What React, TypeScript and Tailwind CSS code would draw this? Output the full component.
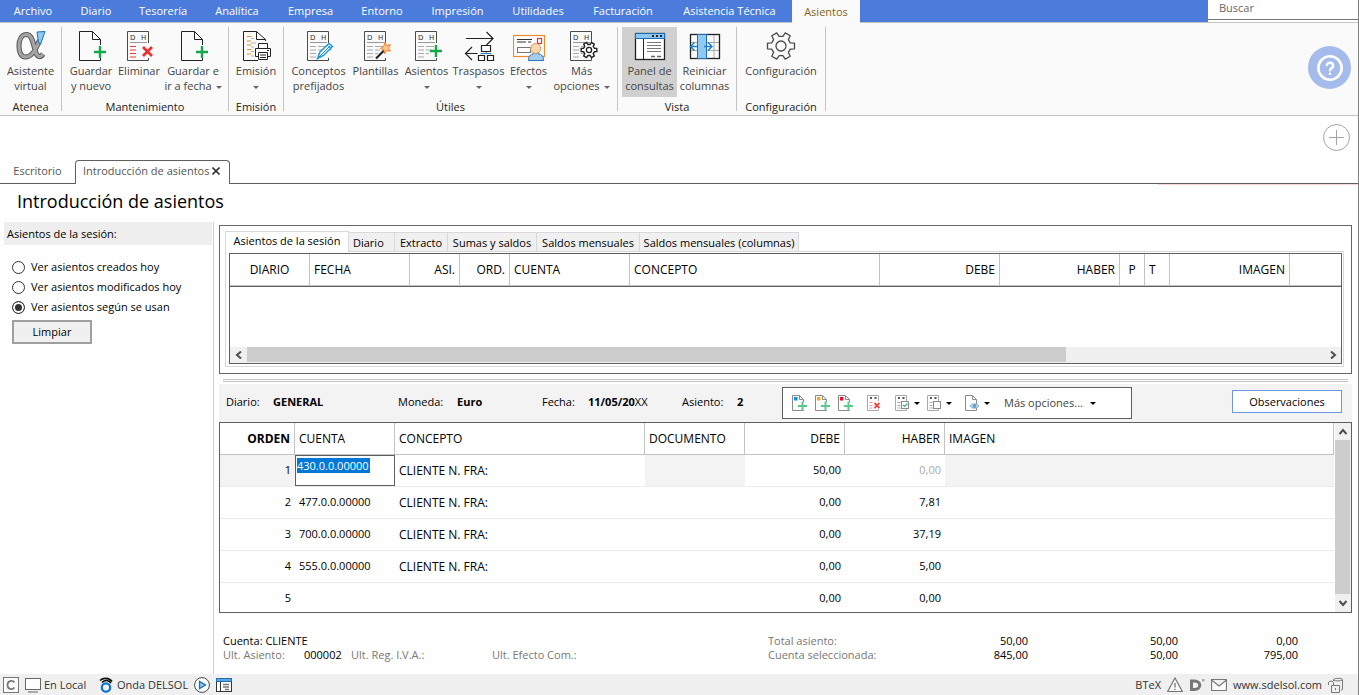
import { useState } from 'react';
import type { ReactNode } from 'react';
import clsx from 'clsx';

const menuItems = [
  { label: 'Archivo', width: 'w-[66px]' },
  { label: 'Diario', width: 'w-[60px]' },
  { label: 'Tesorería', width: 'w-[74px]' },
  { label: 'Analítica', width: 'w-[74px]' },
  { label: 'Empresa', width: 'w-[73px]' },
  { label: 'Entorno', width: 'w-[70px]' },
  { label: 'Impresión', width: 'w-[81px]' },
  { label: 'Utilidades', width: 'w-[80px]' },
  { label: 'Facturación', width: 'w-[90px]' },
  { label: 'Asistencia Técnica', width: 'w-[123px]' },
];

/* ---------- Icons ---------- */

function Icon({ children, className = 'size-8' }: { children: ReactNode; className?: string }) {
  return (
    <svg viewBox="0 0 32 32" className={className} fill="none" stroke="#222" aria-hidden="true">
      {children}
    </svg>
  );
}

function SmallIcon({ children }: { children: ReactNode }) {
  return (
    <svg viewBox="0 0 18 18" className="size-[18px]" fill="none" stroke="#8a8a8a" aria-hidden="true">
      {children}
    </svg>
  );
}

function Caret({ className = 'text-[#666]' }: { className?: string }) {
  return (
    <svg viewBox="0 0 6 3" className={clsx('inline-block h-[3px] w-[6px] align-middle', className)} aria-hidden="true">
      <path d="M0 0h6L3 3z" fill="currentColor" />
    </svg>
  );
}

// Gear outline with six teeth around (cx, cy)
function gearPath(cx: number, cy: number, outer: number, inner: number) {
  const points: string[] = [];
  for (let i = 0; i < 6; i++) {
    const steps = [
      [inner, -19],
      [outer, -12],
      [outer, 12],
      [inner, 19],
    ];
    steps.forEach(([r, offset]) => {
      const a = ((i * 60 + offset) * Math.PI) / 180;
      points.push(`${(cx + r * Math.cos(a)).toFixed(2)} ${(cy + r * Math.sin(a)).toFixed(2)}`);
    });
  }
  return `M${points.join('L')}Z`;
}

function AlphaIcon() {
  const d = 'M24.5 11C21 21 16 28 10.5 28C6 28 4 23 4 17C4 10 7 5.5 11.5 5.5C18 5.5 18 16 21 24C22.5 28 25.5 29 28 25';
  return (
    <Icon>
      <path d={d} stroke="#5c5c5c" strokeWidth="5.2" />
      <path d={d} stroke="#a3a3a3" strokeWidth="3.2" />
      <path d="M22 3L30 2.5L25.5 15.5L23.5 13Z" fill="#8ecbf1" stroke="#1c6fb3" />
    </Icon>
  );
}

function DocPlusIcon() {
  return (
    <Icon>
      <path d="M17.5 2.5H4.5V31.5H25.5V29M17.5 2.5L25.5 10.5V16M17.5 2.5V10.5H25.5" />
      <path d="M25 17v12M19 23h12" stroke="#14a84b" strokeWidth="2.4" />
    </Icon>
  );
}

function LedgerIcon({ children, red = false }: { children: ReactNode; red?: boolean }) {
  return (
    <Icon>
      <path d="M25.5 14V2.5H4.5V31.5H25.5V29" stroke="#4a4a4a" />
      <g fill="#333" stroke="none" fontFamily="DejaVu Sans" fontSize="7">
        <text x="7" y="11">D</text>
        <text x="18" y="11">H</text>
      </g>
      <path d="M7 13.5h17" stroke="#999" />
      {red ? (
        <path d="M7 17.5h6M7 21h6M7 24.5h6M7 28h6" stroke="#ee3a3a" strokeWidth="1.2" />
      ) : (
        <path d="M7 17.5h6M7 21h6M7 24.5h6M7 28h6M15 17.5h8M15 21h5M15 24.5h3" stroke="#aaa" />
      )}
      {children}
    </Icon>
  );
}

function LedgerDeleteIcon() {
  return (
    <LedgerIcon red>
      <path d="M20 18l9 9M29 18l-9 9" stroke="#e83232" strokeWidth="2.8" />
    </LedgerIcon>
  );
}

function LedgerPenIcon() {
  return (
    <LedgerIcon>
      <path d="M14.5 29.5L17 23L26 14.5L29.5 17.5L20.5 26.5Z" fill="#fff" stroke="#189ad8" strokeWidth="1.4" />
      <path d="M15 29L27 17M24 16.5l3.5 3M28.5 16.5l-1.5 5" stroke="#189ad8" />
    </LedgerIcon>
  );
}

function LedgerWandIcon() {
  return (
    <LedgerIcon>
      <path d="M16 29.5L25 20.5" stroke="#222" strokeWidth="2.2" />
      <path d="M25 13l1.5 3.5l4-.8l-2 3.3l2 3l-3.8-.3l-2 3l-.8-3.8l-3.4-1.5l3.2-2z" fill="#ffc48a" stroke="#ef8132" />
    </LedgerIcon>
  );
}

function LedgerPlusIcon() {
  return (
    <LedgerIcon>
      <path d="M25 16v12M19 22h12" stroke="#14a84b" strokeWidth="2.4" />
    </LedgerIcon>
  );
}

function LedgerGearIcon() {
  return (
    <LedgerIcon>
      <path d={gearPath(23, 21, 8, 5.6)} fill="#fff" strokeWidth="1.4" strokeLinejoin="round" />
      <circle cx="23" cy="21" r="2.6" strokeWidth="1.3" />
    </LedgerIcon>
  );
}

function PrintIcon() {
  return (
    <Icon>
      <path d="M16.5 2.5H3.5V31.5H18M16.5 2.5L25.5 10.5V12M16.5 2.5V10.5H25.5" />
      <path d="M7 7.5h4M7 12h4M7 16h4M7 20.5h4M7 25h4" stroke="#f0921e" strokeWidth="1.2" />
      <path d="M11 9.5h3M11 14h5M11 18h3M11 22.5h3M11 27h3" stroke="#b5b5b5" />
      <path d="M15.5 19.5H30.5V27.5H15.5Z" fill="#fff" />
      <path d="M18.5 14.5H27.5V19.5H18.5ZM18.5 23.5H27.5V30.5H18.5ZM20 26h6M20 28.5h6M27 21.5h2" fill="#fff" />
    </Icon>
  );
}

function TransferIcon() {
  return (
    <Icon>
      <path d="M3 9.5H30M23.5 3L30 9.5L23.5 16M14.5 24.5H2.5M9 18L2.5 24.5L9 31" strokeWidth="1.2" />
      <path d="M18.5 16.5h9v6h-9zM15.5 26.5h6v5h-6zM24.5 26.5h6v5h-6z" fill="#fff" strokeWidth="1.2" />
      <path d="M18 25.5V24.5H28V25.5M23 23v1.5" stroke="#1c7cc7" />
    </Icon>
  );
}

function EffectsIcon() {
  return (
    <Icon>
      <rect x="0.5" y="6.5" width="31" height="21" fill="#fdfdfd" stroke="#ef8a2c" strokeWidth="1.2" />
      <path d="M4 10.5h15M4 13h9M15 13h3" stroke="#333" />
      <rect x="24.5" y="9.5" width="4" height="5" stroke="#e8323a" strokeWidth="1.2" />
      <rect x="4.5" y="18.5" width="13" height="5" stroke="#777" />
      <path d="M15.5 31.5C15.5 26.5 18 24.5 23 24.5S30.5 26.5 30.5 31.5Z" fill="#a6cdf0" stroke="#2676b8" />
      <circle cx="22.7" cy="19.5" r="5" fill="#fbd9ae" stroke="#d39a62" />
    </Icon>
  );
}

function QueryPanelIcon() {
  return (
    <Icon>
      <rect x="1.5" y="4.5" width="29" height="26" fill="#fff" strokeWidth="1.3" />
      <rect x="1.5" y="4.5" width="29" height="5" fill="#8ec8f0" stroke="#1c6fb3" />
      <path d="M18 7h2M22 7h2M26 7h2" strokeWidth="1.8" />
      <path d="M9.5 10V30" />
      <path d="M13 13.5H27M13 16.5H27M13 19.5H27M13 22.5H27" stroke="#777" />
      <path d="M17 27.5h4M23 27.5h4" stroke="#666" strokeWidth="1.5" />
    </Icon>
  );
}

function ResetColumnsIcon() {
  return (
    <Icon>
      <path d="M1 13.5H31M1 21.5H31M25 6V29" stroke="#aaa" />
      <rect x="1.5" y="5.5" width="29" height="24" strokeWidth="1.3" />
      <rect x="8.5" y="5.5" width="9" height="24" fill="#90c9f2" stroke="#1c6fb3" />
      <path
        d="M8 17.5H2M5.5 13.5L1.5 17.5L5.5 21.5M15 17.5H23M19 13.5L23 17.5L19 21.5"
        stroke="#1c7cc7"
        strokeWidth="1.4"
      />
    </Icon>
  );
}

function GearIcon() {
  return (
    <Icon>
      <path d={gearPath(16, 17, 13.8, 9.8)} stroke="#4a4a4a" strokeWidth="1.3" strokeLinejoin="round" />
      <circle cx="16" cy="17" r="5" stroke="#4a4a4a" strokeWidth="1.3" />
    </Icon>
  );
}

function PageIcon({ children }: { children: ReactNode }) {
  return (
    <SmallIcon>
      <path d="M9.5 1.5H2.5V16.5H13.5V5.5L9.5 1.5V5.5H13.5" fill="#fff" />
      {children}
    </SmallIcon>
  );
}

function NewEntryIcon({ color }: { color: string }) {
  return (
    <PageIcon>
      <rect x="4" y="3" width="3.5" height="3.5" fill={color} stroke="none" />
      <path d="M12.5 8v8M9 12h8" stroke="#fff" strokeWidth="3.5" />
      <path d="M12.5 7.5v9M8 12h9" stroke="#5bc98c" strokeWidth="2" />
    </PageIcon>
  );
}

function SmallLedgerIcon({ children, red = false }: { children: ReactNode; red?: boolean }) {
  return (
    <SmallIcon>
      <path d="M13.5 7V1.5H2.5V16.5H13.5V15" stroke="#aaa" />
      <path d="M5 4h2M9.5 4h2" stroke="#555" strokeWidth="2" />
      <path d="M4.5 8.5h3M4.500 11.500h3M4.500 14h3" stroke={red ? '#f09090' : '#aaa'} />
      {children}
    </SmallIcon>
  );
}

/* ---------- Ribbon ---------- */

type RibbonItem = {
  lines: string[];
  icon: ReactNode;
  width: string;
  caret?: 'inline' | 'below';
  active?: boolean;
};

type RibbonGroup = { title: string; width: string; items: RibbonItem[] };

const ribbon: RibbonGroup[] = [
  {
    title: 'Atenea',
    width: 'w-[62px]',
    items: [{ lines: ['Asistente', 'virtual'], icon: <AlphaIcon />, width: 'w-[60px]' }],
  },
  {
    title: 'Mantenimiento',
    width: 'w-[167px]',
    items: [
      { lines: ['Guardar', 'y nuevo'], icon: <DocPlusIcon />, width: 'w-[48px]' },
      { lines: ['Eliminar'], icon: <LedgerDeleteIcon />, width: 'w-[48px]' },
      { lines: ['Guardar e', 'ir a fecha'], icon: <DocPlusIcon />, width: 'w-[60px]', caret: 'inline' },
    ],
  },
  {
    title: 'Emisión',
    width: 'w-[55px]',
    items: [{ lines: ['Emisión'], icon: <PrintIcon />, width: 'w-[48px]', caret: 'below' }],
  },
  {
    title: 'Útiles',
    width: 'w-[334px]',
    items: [
      { lines: ['Conceptos', 'prefijados'], icon: <LedgerPenIcon />, width: 'w-[60px]' },
      { lines: ['Plantillas'], icon: <LedgerWandIcon />, width: 'w-[54px]' },
      { lines: ['Asientos'], icon: <LedgerPlusIcon />, width: 'w-[48px]', caret: 'below' },
      { lines: ['Traspasos'], icon: <TransferIcon />, width: 'w-[56px]', caret: 'below' },
      { lines: ['Efectos'], icon: <EffectsIcon />, width: 'w-[44px]', caret: 'below' },
      { lines: ['Más', 'opciones'], icon: <LedgerGearIcon />, width: 'w-[62px]', caret: 'inline' },
    ],
  },
  {
    title: 'Vista',
    width: 'w-[119px]',
    items: [
      { lines: ['Panel de', 'consultas'], icon: <QueryPanelIcon />, width: 'w-[55px]', active: true },
      { lines: ['Reiniciar', 'columnas'], icon: <ResetColumnsIcon />, width: 'w-[55px]' },
    ],
  },
  {
    title: 'Configuración',
    width: 'w-[89px]',
    items: [{ lines: ['Configuración'], icon: <GearIcon />, width: 'w-[80px]' }],
  },
];

function RibbonButton({ item }: { item: RibbonItem }) {
  return (
    <button
      className={clsx(
        'flex h-[70px] flex-col items-center pt-0.5 whitespace-nowrap text-[#444] leading-[15px]',
        item.width,
        item.active && 'bg-[#d0d0d0]',
      )}
    >
      <span className="mb-0.5">{item.icon}</span>
      <span>{item.lines[0]}</span>
      {item.lines[1] && (
        <span>
          {item.lines[1]}
          {item.caret === 'inline' && <Caret className="ml-1 text-[#666]" />}
        </span>
      )}
      {item.caret === 'below' && (
        <span>
          <Caret />
        </span>
      )}
    </button>
  );
}

/* ---------- Data ---------- */

const queryTabs = [
  { label: 'Asientos de la sesión', className: 'w-[124px]' },
  { label: 'Diario', className: 'w-[46px] pl-1 text-left' },
  { label: 'Extracto', className: 'w-[53px]' },
  { label: 'Sumas y saldos', className: 'w-[89px]' },
  { label: 'Saldos mensuales', className: 'w-[103px]' },
  { label: 'Saldos mensuales (columnas)', className: 'w-[159px]' },
];

const queryColumns = [
  { label: 'DIARIO', className: 'w-[80px] text-center' },
  { label: 'FECHA', className: 'w-[100px] text-left' },
  { label: 'ASI.', className: 'w-[50px] text-right' },
  { label: 'ORD.', className: 'w-[50px] text-right' },
  { label: 'CUENTA', className: 'w-[120px] text-left' },
  { label: 'CONCEPTO', className: 'w-[250px] text-left' },
  { label: 'DEBE', className: 'w-[120px] text-right' },
  { label: 'HABER', className: 'w-[120px] text-right' },
  { label: 'P', className: 'w-[25px] text-center' },
  { label: 'T', className: 'w-[25px] text-left' },
  { label: 'IMAGEN', className: 'w-[120px] text-right' },
];

const entryColumns = [
  { label: 'ORDEN', className: 'w-[75px] text-right font-bold' },
  { label: 'CUENTA', className: 'w-[100px] text-left' },
  { label: 'CONCEPTO', className: 'w-[250px] text-left' },
  { label: 'DOCUMENTO', className: 'w-[100px] text-left' },
  { label: 'DEBE', className: 'w-[100px] text-right' },
  { label: 'HABER', className: 'w-[100px] text-right' },
  { label: 'IMAGEN', className: 'text-left' },
];

const entries = [
  { orden: 1, cuenta: '430.0.0.00000', concepto: 'CLIENTE N. FRA:', debe: '50,00', haber: '0,00' },
  { orden: 2, cuenta: '477.0.0.00000', concepto: 'CLIENTE N. FRA:', debe: '0,00', haber: '7,81' },
  { orden: 3, cuenta: '700.0.0.00000', concepto: 'CLIENTE N. FRA:', debe: '0,00', haber: '37,19' },
  { orden: 4, cuenta: '555.0.0.00000', concepto: 'CLIENTE N. FRA:', debe: '0,00', haber: '5,00' },
  { orden: 5, cuenta: '', concepto: '', debe: '0,00', haber: '0,00' },
];

const sessionFilters = ['Ver asientos creados hoy', 'Ver asientos modificados hoy', 'Ver asientos según se usan'];

function ScrollArrow({ d, label, className }: { d: string; label: string; className: string }) {
  return (
    <button aria-label={label} className={clsx('flex shrink-0 items-center justify-center', className)}>
      <svg viewBox="0 0 8 8" className="size-2" fill="none" stroke="#4d4d4d" strokeWidth="2">
        <path d={d} />
      </svg>
    </button>
  );
}

/* ---------- Sections ---------- */

function MenuBar() {
  return (
    <header className="flex h-[23px] border-b border-[#c3c3c3] bg-[#4b7bdb] text-white">
      <nav className="flex grow">
        {menuItems.map(({ label, width }) => (
          <button key={label} className={clsx('whitespace-nowrap', width)}>
            {label}
          </button>
        ))}
        <button className="-mb-px ml-px w-[68px] bg-[#fafafa] text-[#866213]">Asientos</button>
      </nav>
      <div className="w-[150px] bg-white">
        <input
          type="search"
          aria-label="Buscar"
          placeholder="Buscar"
          className="block h-5 w-full border-b border-[#777] px-[11px] pb-1 text-black outline-none placeholder:text-[#666]"
        />
      </div>
    </header>
  );
}

function Ribbon() {
  return (
    <div className="flex h-[93px] border-b border-[#c3c3c3] bg-[#fafafa]">
      {ribbon.map((group) => (
        <section
          key={group.title}
          className={clsx('mt-1 mb-1 flex shrink-0 flex-col items-center border-r border-[#c3c3c3]', group.width)}
        >
          <div className="flex justify-center">
            {group.items.map((item) => (
              <RibbonButton key={item.lines.join(' ')} item={item} />
            ))}
          </div>
          <h2 className="mt-[3px] leading-[14px] text-[#222]">{group.title}</h2>
        </section>
      ))}
      <button
        aria-label="Ayuda"
        className="mt-[23px] mr-[7px] ml-auto flex size-[43px] shrink-0 items-center justify-center rounded-full bg-[#a5bbeb]"
      >
        <svg viewBox="0 0 24 24" className="size-7" fill="none" stroke="#fff" strokeWidth="2.2" strokeLinecap="round">
          <circle cx="12" cy="12" r="10" />
          <path d="M9.3 9.3a2.8 2.8 0 0 1 5.4.9c0 1.8-2.7 2.300-2.700 3.800M12 17h.01" />
        </svg>
      </button>
    </div>
  );
}

function DocumentTabs() {
  return (
    <div>
      <div className="flex h-11 justify-end pt-2 pr-2">
        <button aria-label="Añadir pestaña" className="size-[27px]">
          <svg viewBox="0 0 27 27" className="size-[27px]" fill="none" stroke="#a3a3a3">
            <circle cx="13.5" cy="13.5" r="13" />
            <path d="M6 13.5H21M13.5 6V21" />
          </svg>
        </button>
      </div>
      <div className="flex h-6 border-b border-[#5f5f5f] text-[#555]">
        <button className="w-[75px] pb-0.5">Escritorio</button>
        <div className="-mb-px flex w-[155px] items-center rounded-t-[4px] border border-b-0 border-[#5f5f5f] bg-white pr-[9px] pb-[3px] pl-[7px]">
          <button className="whitespace-nowrap">Introducción de asientos</button>
          <button aria-label="Cerrar" className="ml-auto">
            <svg viewBox="0 0 8 8" className="size-2" stroke="#333" strokeWidth="1.6">
              <path d="M.5.5l7 7M7.5.5l-7 7" />
            </svg>
          </button>
        </div>
      </div>
      <div className="ml-auto h-px w-[200px] bg-[#f6d6d6]" />
    </div>
  );
}

function Sidebar() {
  const [filter, setFilter] = useState(2);

  return (
    <aside className="w-[214px] shrink-0 border-r border-[#d0d0d0] pl-1">
      <h2 className="mr-px h-[23px] bg-[#eee] pl-[3px] leading-[23px]">Asientos de la sesión:</h2>
      <div className="mt-3 flex flex-col pl-2">
        {sessionFilters.map((label, index) => (
          <label key={label} className="flex h-5 items-center gap-1.5">
            <input
              type="radio"
              name="filtro"
              checked={filter === index}
              onChange={() => setFilter(index)}
              className="size-[13px] appearance-none rounded-full border border-[#333] bg-white checked:bg-[#333] checked:shadow-[inset_0_0_0_2px_#fff]"
            />
            {label}
          </label>
        ))}
      </div>
      <button className="mt-[3px] ml-2 h-6 w-20 border-2 border-[#9f9f9f] bg-[#f0f0f0]">Limpiar</button>
    </aside>
  );
}

function QueryPanel() {
  const [tab, setTab] = useState(0);

  return (
    <section className="border border-[#666] px-[5px] pt-[5px] pb-1.5">
      <div className="flex items-end">
        {queryTabs.map(({ label, className }, index) => (
          <button
            key={label}
            onClick={() => setTab(index)}
            className={clsx(
              'border border-b-0 border-[#d9d9d9] whitespace-nowrap',
              className,
              index > 0 && 'border-l-0',
              tab === index ? '-mb-px h-[21px] bg-white pb-0.5' : 'h-[19px] bg-[#f0f0f0] pt-0.5',
            )}
          >
            {label}
          </button>
        ))}
      </div>
      <div className="mr-0.5 border border-[#d9d9d9] pt-px pr-px pb-0.5 pl-[3px]">
        <div className="border border-[#5f5f5f]">
          <table className="w-full table-fixed border-separate border-spacing-0 text-xs">
            <thead>
              <tr>
                {queryColumns.map(({ label, className }) => (
                  <th key={label} className={clsx('h-8 border-r border-b border-[#c3c3c3] px-1 py-0 font-normal', className)}>
                    {label}
                  </th>
                ))}
                <td className="border-b border-[#c3c3c3] p-0" />
              </tr>
            </thead>
          </table>
          <div className="h-[61px] border-t border-[#5f5f5f]" />
          <div className="flex h-4 bg-[#f0f0f0]">
            <ScrollArrow label="Desplazar a la izquierda" className="w-[17px]" d="M6 0.5L2 4L6 7.5" />
            <div className="grow">
              <div className="h-[15px] w-[76%] bg-[#cdcdcd]" />
            </div>
            <ScrollArrow label="Desplazar a la derecha" className="w-[17px]" d="M2 0.5L6 4L2 7.5" />
          </div>
        </div>
      </div>
    </section>
  );
}

function EntryToolbar() {
  return (
    <div className="flex items-center bg-[#f3f3f3] py-[3px] pl-[7px]">
      <dl className="flex items-center pb-0.5">
        <dt className="w-[47px]">Diario:</dt>
        <dd className="w-[125px] font-bold">GENERAL</dd>
        <dt className="w-[59px]">Moneda:</dt>
        <dd className="w-[85px] font-bold">Euro</dd>
        <dt className="w-[46px]">Fecha:</dt>
        <dd className="w-[94px] font-bold">
          11/05/20<span className="font-normal">XX</span>
        </dd>
        <dt className="w-[55px]">Asiento:</dt>
        <dd className="w-[45px] font-bold">2</dd>
      </dl>
      <div className="flex h-8 w-[350px] items-center border border-[#5f5f5f] bg-white pl-[7px]">
        <div className="flex gap-[5px]">
          <button aria-label="Nuevo apunte">
            <NewEntryIcon color="#0e90e0" />
          </button>
          <button aria-label="Insertar apunte">
            <NewEntryIcon color="#f5a623" />
          </button>
          <button aria-label="Duplicar apunte">
            <NewEntryIcon color="#e8102a" />
          </button>
        </div>
        <button aria-label="Eliminar apunte" className="ml-[11px]">
          <SmallLedgerIcon red>
            <path d="M9.5 9l5 5M14.5 9l-5 5" stroke="#ea4848" strokeWidth="1.8" />
          </SmallLedgerIcon>
        </button>
        <button aria-label="Validar apuntes" className="ml-2.5 flex items-center gap-[3px]">
          <SmallLedgerIcon>
            <rect x="8.5" y="7.5" width="7" height="7" fill="#fff" />
            <path d="M10 11l1.5 1.5L14.5 9.5" stroke="#35b56c" strokeWidth="1.2" />
          </SmallLedgerIcon>
          <Caret className="text-black" />
        </button>
        <button aria-label="Marcar apuntes" className="ml-[5px] flex items-center gap-[3px]">
          <SmallLedgerIcon>
            <rect x="8.5" y="7.5" width="7" height="7" fill="#fff" />
          </SmallLedgerIcon>
          <Caret className="text-black" />
        </button>
        <button aria-label="Ver documento" className="ml-[11px] flex items-center gap-[3px]">
          <PageIcon>
            <path d="M7 12C9 9 14 9 16 12C14 15 9 15 7 12Z" fill="#cfe3f2" stroke="#8bb4d0" />
            <circle cx="11.5" cy="12" r="2" fill="#5c9fd0" stroke="none" />
          </PageIcon>
          <Caret className="text-black" />
        </button>
        <button className="ml-3.5 flex items-center gap-[7px] whitespace-nowrap text-[#444]">
          Más opciones...
          <Caret className="text-black" />
        </button>
      </div>
      <button className="mr-2.5 mb-[3px] ml-auto h-[23px] w-[110px] border border-[#6f97df] bg-white">
        Observaciones
      </button>
    </div>
  );
}

function EntryGrid() {
  return (
    <div className="flex h-[191px] overflow-hidden border border-[#5f5f5f]">
      <div className="min-w-0 grow">
        <table className="w-full table-fixed border-separate border-spacing-0 text-xs">
          <thead>
            <tr>
              {entryColumns.map(({ label, className }) => (
                <th
                  key={label}
                  className={clsx(
                    'h-8 border-r border-b border-[#c3c3c3] px-1 py-0',
                    className,
                    label !== 'ORDEN' && 'font-normal',
                  )}
                >
                  {label}
                </th>
              ))}
            </tr>
          </thead>
          <tbody>
            {entries.map((row) => {
              const current = row.orden === 1;
              const cell = 'h-8 border-b border-[#ececec] py-0';
              const shade = current && 'bg-[#f3f3f3]';
              return (
                <tr key={row.orden}>
                  <td className={clsx(cell, 'px-1 text-right text-[11px]', shade)}>{row.orden}</td>
                  <td className={clsx(cell, 'text-[11px]', current ? 'px-0' : 'px-1')}>
                    {current ? (
                      <div className="h-[31px] border border-[#5f5f5f] pt-0.5 pl-px">
                        <input
                          aria-label="Cuenta"
                          defaultValue={row.cuenta}
                          className="block h-[15px] w-[73px] bg-[#0078d7] text-white outline-none"
                        />
                      </div>
                    ) : (
                      row.cuenta
                    )}
                  </td>
                  <td className={clsx(cell, 'px-1')}>{row.concepto}</td>
                  <td className={clsx(cell, shade)} />
                  <td className={clsx(cell, 'px-1 text-right text-[11px]')}>{row.debe}</td>
                  <td className={clsx(cell, 'px-1 text-right text-[11px]', current && 'text-[#aaa]')}>{row.haber}</td>
                  <td className={clsx(cell, shade)} />
                </tr>
              );
            })}
          </tbody>
        </table>
      </div>
      <div className="ml-px flex w-4 shrink-0 flex-col bg-[#f0f0f0]">
        <ScrollArrow label="Desplazar arriba" className="h-[17px]" d="M0.5 6L4 2L7.5 6" />
        <div className="mr-px grow bg-[#cdcdcd]" />
        <ScrollArrow label="Desplazar abajo" className="h-[18px]" d="M0.5 2L4 6L7.5 2" />
      </div>
    </div>
  );
}

function Totals() {
  return (
    <div className="mt-[21px] mb-3 flex pl-1 leading-[14px] text-[#777]">
      <div className="w-[545px]">
        <p className="text-black">Cuenta: CLIENTE</p>
        <p className="flex">
          <span className="w-[81px]">Ult. Asiento:</span>
          <span className="w-[47px] text-black">000002</span>
          <span className="w-[141px]">Ult. Reg. I.V.A.:</span>
          <span>Ult. Efecto Com.:</span>
        </p>
      </div>
      <table>
        <tbody>
          <tr>
            <th className="w-[140px] p-0 text-left font-normal">Total asiento:</th>
            <td className="w-[120px] p-0 text-right text-black">50,00</td>
            <td className="w-[150px] p-0 text-right text-black">50,00</td>
            <td className="w-[120px] p-0 text-right text-black">0,00</td>
          </tr>
          <tr>
            <th className="p-0 text-left font-normal">Cuenta seleccionada:</th>
            <td className="p-0 text-right text-black">845,00</td>
            <td className="p-0 text-right text-black">50,00</td>
            <td className="p-0 text-right text-black">795,00</td>
          </tr>
        </tbody>
      </table>
    </div>
  );
}

function StatusBar() {
  return (
    <footer className="flex h-[21px] items-center bg-[#f0f0f0] pr-3.5 pl-[3px] text-[#333]">
      <svg viewBox="0 0 16 16" className="size-4" fill="none" stroke="#777">
        <rect x="0.5" y="0.5" width="15" height="15" fill="#fafafa" />
        <path d="M11.5 5.500C9.500 3 4.500 3.500 4.500 8S9.500 13 11.500 10.500" strokeWidth="1.8" />
      </svg>
      <svg viewBox="0 0 16 16" className="ml-1.5 size-4" fill="none" stroke="#666">
        <rect x="0.5" y="1.5" width="15" height="11" fill="#fff" />
        <path d="M3 15H13" />
      </svg>
      <span className="ml-[3px] w-[54px] whitespace-nowrap">En Local</span>
      <svg viewBox="0 0 16 16" className="size-4" fill="none">
        <path d="M2 3.5C5 0.5 11 0.5 14 4.500M4 5.500C7 2.500 10.500 3 13 6" stroke="#111" strokeWidth="1.7" />
        <circle cx="8" cy="10.5" r="4.2" stroke="#0b74d1" strokeWidth="2.2" />
      </svg>
      <span className="ml-[3px] w-[77px] whitespace-nowrap">Onda DELSOL</span>
      <button aria-label="Reproducir">
        <svg viewBox="0 0 16 16" className="size-4" fill="none" stroke="#444">
          <circle cx="8" cy="8" r="7.4" fill="#fff" />
          <path d="M5.5 4.5V11.5L11.5 8Z" fill="#8ec8f0" stroke="#1c6fb3" strokeWidth="1.3" />
        </svg>
      </button>
      <button aria-label="Panel" className="ml-1.5">
        <svg viewBox="0 0 16 16" className="size-4" fill="none" stroke="#333">
          <rect x="0.5" y="1.5" width="15" height="13" fill="#fff" />
          <rect x="0.5" y="1.5" width="15" height="3" fill="#5aa7e0" stroke="#1c6fb3" />
          <path d="M4.5 5V14.5" />
          <path d="M7 7.5h6M7 10h6M9 12.5h4" stroke="#777" strokeWidth="1.5" />
        </svg>
      </button>
      <div className="ml-auto flex items-center gap-1.5">
        <span>BTeX</span>
        <svg viewBox="0 0 16 16" className="size-4" fill="none" stroke="#777">
          <path d="M8 1L15.3 14.5H0.7Z" fill="#fafafa" strokeWidth="1.2" />
          <path d="M8 6V10.5M8 11.7V13" strokeWidth="1.3" />
        </svg>
        <svg viewBox="0 0 16 16" className="size-4" fill="none">
          <path d="M2.5 4H5.500C12.500 4 12.500 12.500 5.500 12.500H2.500Z" stroke="#777" strokeWidth="3" />
          <rect x="13" y="2" width="2.5" height="2.5" fill="#aaa" />
        </svg>
        <svg viewBox="0 0 16 16" className="size-4" fill="none" stroke="#777">
          <path d="M0.5 2.5H15.5V13.5H0.5ZM0.5 3L8 9L15.5 3" fill="#fafafa" strokeWidth="1.2" />
        </svg>
        <a href="#" className="whitespace-nowrap">
          www.sdelsol.com
        </a>
        <svg viewBox="0 0 16 16" className="size-4" fill="none" stroke="#777">
          <path d="M5.5 4V2.5C6.5 1 14.5 1 14.5 2.5V12.5L13 13.5M5.5 3C8 4.2 12 4.2 14.5 3" />
          <path d="M3.5 8.5H11.5V15.5H3.5ZM0.5 8V6C0.5 3.5 5.5 3.5 5.5 6V8M7.5 11v2" />
        </svg>
      </div>
    </footer>
  );
}

export default function App() {
  return (
    <div className="flex min-h-screen flex-col border-r border-[#808080] bg-white font-['Open_Sans',sans-serif] text-[11px] leading-4 text-black">
      <MenuBar />
      <Ribbon />
      <DocumentTabs />
      <h1 className="px-[17px] pt-[3px] pb-2 text-lg leading-[26px]">Introducción de asientos</h1>
      <main className="flex grow">
        <Sidebar />
        <div className="min-w-0 grow pt-[3px] pr-1.5 pl-[5px]">
          <QueryPanel />
          <div className="mx-1 mt-[5px] mb-0.5 h-[3px] border-y border-[#c3c3c3]" />
          <EntryToolbar />
          <EntryGrid />
          <Totals />
        </div>
      </main>
      <StatusBar />
    </div>
  );
}
